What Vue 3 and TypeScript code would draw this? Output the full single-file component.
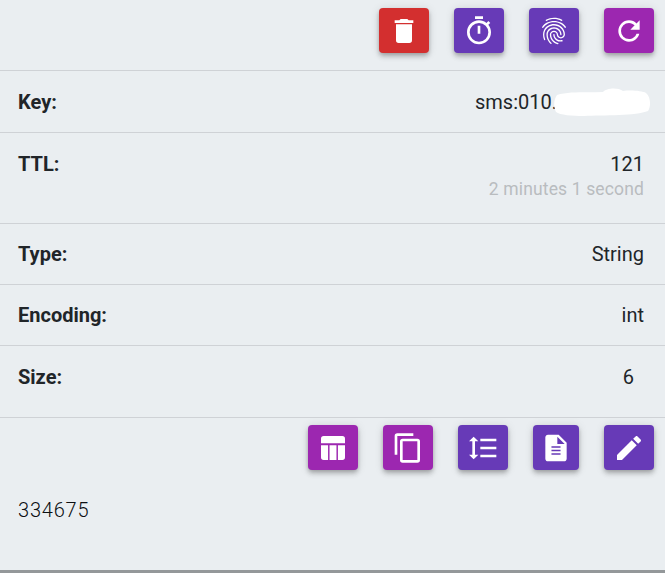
<script setup lang="ts">
const top = [
  { color: 'red', w: 50, d: 'M19,4H15.5L14.5,3H9.5L8.5,4H5V6H19V4M6,19A2,2 0 0,0 8,21H16A2,2 0 0,0 18,19V7H6V19Z' },
  { color: 'deep', w: 50, d: 'M12,20A7,7 0 0,1 5,13A7,7 0 0,1 12,6A7,7 0 0,1 19,13A7,7 0 0,1 12,20M19.03,7.39L20.45,5.97C20,5.46 19.55,5 19.04,4.56L17.62,6C16.07,4.74 14.12,4 12,4A9,9 0 0,0 3,13A9,9 0 0,0 12,22C17,22 21,17.97 21,13C21,10.88 20.26,8.93 19.03,7.39M11,14H13V8H11M15,1H9V3H15V1Z' },
  { color: 'deep', w: 50, d: 'M17.81,4.47C17.73,4.47 17.65,4.45 17.58,4.41C15.66,3.42 14,3 12,3C10.03,3 8.15,3.47 6.44,4.41C6.2,4.54 5.9,4.45 5.76,4.21C5.63,3.97 5.72,3.66 5.96,3.53C7.82,2.5 9.86,2 12,2C14.14,2 16,2.47 18.04,3.5C18.29,3.65 18.38,3.95 18.25,4.19C18.16,4.37 18,4.47 17.81,4.47M3.5,9.72C3.4,9.72 3.3,9.69 3.21,9.63C3,9.47 2.93,9.16 3.09,8.93C4.08,7.53 5.34,6.43 6.84,5.66C10,4.04 14,4.03 17.15,5.65C18.65,6.42 19.91,7.5 20.9,8.9C21.06,9.12 21,9.44 20.78,9.6C20.55,9.76 20.24,9.71 20.08,9.5C19.18,8.22 18.04,7.23 16.69,6.54C13.82,5.07 10.15,5.07 7.29,6.55C5.93,7.25 4.79,8.25 3.89,9.5C3.81,9.65 3.66,9.72 3.5,9.72M9.75,21.79C9.62,21.79 9.5,21.74 9.4,21.64C8.53,20.77 8.06,20.21 7.39,19C6.7,17.77 6.34,16.27 6.34,14.66C6.34,11.69 8.88,9.27 12,9.27C15.12,9.27 17.66,11.69 17.66,14.66A0.5,0.5 0 0,1 17.16,15.16A0.5,0.5 0 0,1 16.66,14.66C16.66,12.24 14.57,10.27 12,10.27C9.43,10.27 7.34,12.24 7.34,14.66C7.34,16.1 7.66,17.43 8.27,18.5C8.91,19.66 9.35,20.15 10.12,20.93C10.31,21.13 10.31,21.44 10.12,21.64C10,21.74 9.88,21.79 9.75,21.79M16.92,19.94C15.73,19.94 14.68,19.64 13.82,19.05C12.33,18.04 11.44,16.4 11.44,14.66A0.5,0.5 0 0,1 11.94,14.16A0.5,0.5 0 0,1 12.44,14.66C12.44,16.07 13.16,17.4 14.38,18.22C15.09,18.7 15.92,18.93 16.92,18.93C17.16,18.93 17.56,18.9 17.96,18.83C18.23,18.78 18.5,18.96 18.54,19.24C18.59,19.5 18.41,19.77 18.13,19.82C17.56,19.93 17.06,19.94 16.92,19.94M14.91,22C14.87,22 14.82,22 14.78,22C13.19,21.54 12.15,20.95 11.06,19.88C9.66,18.5 8.89,16.64 8.89,14.66C8.89,13.04 10.27,11.72 11.97,11.72C13.67,11.72 15.05,13.04 15.05,14.66C15.05,15.73 16,16.6 17.13,16.6C18.28,16.6 19.21,15.73 19.21,14.66C19.21,10.89 15.96,7.83 11.96,7.83C9.12,7.83 6.5,9.41 5.35,11.86C4.96,12.67 4.76,13.62 4.76,14.66C4.76,15.44 4.83,16.67 5.43,18.27C5.53,18.53 5.4,18.82 5.14,18.91C4.88,19 4.59,18.87 4.5,18.62C4,17.31 3.77,16 3.77,14.66C3.77,13.46 4,12.37 4.45,11.42C5.78,8.63 8.73,6.82 11.96,6.82C16.5,6.82 20.21,10.33 20.21,14.65C20.21,16.27 18.83,17.59 17.13,17.59C15.43,17.59 14.05,16.27 14.05,14.65C14.05,13.58 13.12,12.71 11.97,12.71C10.82,12.71 9.89,13.58 9.89,14.65C9.89,16.36 10.55,17.96 11.76,19.16C12.71,20.1 13.62,20.62 15.03,21C15.3,21.08 15.45,21.36 15.38,21.62C15.33,21.85 15.12,22 14.91,22Z' },
  { color: 'purple', w: 50, d: 'M17.65,6.35C16.2,4.9 14.21,4 12,4A8,8 0 0,0 4,12A8,8 0 0,0 12,20C15.73,20 18.84,17.45 19.73,14H17.65C16.83,16.33 14.61,18 12,18A6,6 0 0,1 6,12A6,6 0 0,1 12,6C13.66,6 15.14,6.69 16.22,7.78L13,11H20V4L17.65,6.35Z' },
]
const bottom = [
  { color: 'purple', w: 50, d: 'M5,3H19A2,2 0 0,1 21,5V8.5H3V5A2,2 0 0,1 5,3M3,10H8.3V21H5A2,2 0 0,1 3,19V10M9.4,10H14.6V21H9.4V10M15.7,10H21V19A2,2 0 0,1 19,21H15.7V10Z' },
  { color: 'purple', w: 50, d: 'M19,21H8V7H19M19,5H8A2,2 0 0,0 6,7V21A2,2 0 0,0 8,23H19A2,2 0 0,0 21,21V7A2,2 0 0,0 19,5M16,1H4A2,2 0 0,0 2,3V17H4V3H16V1Z' },
  { color: 'deep', w: 50, d: 'M10,13H22V11H10M10,19H22V17H10M10,7H22V5H10M6,7H8.5L5,3.5L1.5,7H4V17H1.5L5,20.5L8.5,17H6V7Z' },
  { color: 'deep', w: 46, d: 'M14,2H6C4.9,2 4,2.9 4,4V20C4,21.1 4.9,22 6,22H18C19.1,22 20,21.1 20,20V8L14,2M15.4,17H8.6V15.9H15.4V17M15.4,14.4H8.6V13.3H15.4V14.4M15.4,11.8H8.6V10.7H15.4V11.8M13,9V3.5L18.5,9H13Z' },
  { color: 'deep', w: 50, d: 'M20.71,7.04C21.1,6.65 21.1,6 20.71,5.63L18.37,3.29C18,2.9 17.35,2.9 16.96,3.29L15.12,5.12L18.87,8.87M3,17.25V21H6.75L17.81,9.93L14.06,6.18L3,17.25Z' },
]
</script>

<template>
  <main class="panel">
    <div class="actions first">
      <button v-for="b in top" :key="b.d" class="btn" :class="[b.color, { narrow: b.w === 46 }]">
        <svg viewBox="0 0 24 24" class="icon"><path :d="b.d" /></svg>
      </button>
    </div>

    <div class="row key">
      <span class="label">Key:</span>
      <span class="value">sms:010.<span class="masked"><svg class="blob" viewBox="0 0 97 28"><path d="M3 7C16 3 34 5 49 4C52 0 64 -1 69 3C78 2 88 3 92 5C97 9 97 19 94 23C82 28 50 27 30 28C18 28 6 27 2 24C-1 18 0 11 3 7Z" /></svg></span></span>
    </div>

    <div class="row ttl">
      <span class="label">TTL:</span>
      <div class="stack">
        <span class="value">121</span>
        <span class="hint">2 minutes 1 second</span>
      </div>
    </div>

    <div class="row">
      <span class="label">Type:</span>
      <span class="value">String</span>
    </div>

    <div class="row">
      <span class="label">Encoding:</span>
      <span class="value">int</span>
    </div>

    <div class="row size">
      <span class="label">Size:</span>
      <span class="value">6</span>
    </div>

    <div class="actions second">
      <button v-for="b in bottom" :key="b.d" class="btn" :class="[b.color, { narrow: b.w === 46 }]">
        <svg viewBox="0 0 24 24" class="icon"><path :d="b.d" /></svg>
      </button>
    </div>

    <div class="content">334675</div>
  </main>
</template>

<style scoped>
.panel {
  box-sizing: border-box;
  width: 665px;
  height: 573px;
  background: #eaeef1;
  border-bottom: 3px solid #94989a;
  font-family: Roboto, sans-serif;
  color: #212529;
  font-size: 20px;
  line-height: 25px;
  overflow: hidden;
}
.actions {
  display: flex;
  justify-content: flex-end;
  gap: 25px;
  padding: 8px 11px 17px 0;
}
.btn {
  display: flex;
  align-items: center;
  justify-content: center;
  width: 50px;
  height: 45px;
  padding: 0;
  border: 0;
  border-radius: 4px;
  box-shadow: 0 2px 4px -1px rgba(0, 0, 0, 0.2), 0 4px 5px rgba(0, 0, 0, 0.14), 0 1px 10px rgba(0, 0, 0, 0.12);
}
.btn.narrow {
  width: 46px;
}
.red {
  background: #d32f2f;
}
.deep {
  background: #673ab7;
}
.purple {
  background: #9c27b0;
}
.icon {
  width: 32px;
  height: 32px;
  fill: #fff;
}
.row {
  display: flex;
  justify-content: space-between;
  align-items: flex-start;
  padding: 18px 21px 17px 18px;
  border-top: 1px solid #cfd2d6;
}
.row.key {
  padding-top: 19px;
  padding-bottom: 17px;
}
.row.ttl {
  padding-top: 19px;
  padding-bottom: 21px;
}
.row.size {
  padding-top: 19px;
  padding-right: 31px;
  padding-bottom: 27px;
}
.label {
  font-weight: 700;
}
.stack {
  display: flex;
  flex-direction: column;
  align-items: flex-end;
}
.hint {
  color: #b9bcbf;
  font-size: 17.5px;
  letter-spacing: 0.14px;
}
.masked {
  position: relative;
  display: inline-block;
  width: 87px;
  height: 1px;
}
.blob {
  position: absolute;
  left: -3px;
  top: -20px;
  width: 97px;
  height: 28px;
  fill: #fff;
}
.second {
  border-top: 1px solid #cfd2d6;
  padding-top: 7px;
  padding-bottom: 0;
}
.content {
  padding: 28px 18px 0;
  font-weight: 300;
  color: #0c0f12;
  letter-spacing: 0.8px;
}
</style>
